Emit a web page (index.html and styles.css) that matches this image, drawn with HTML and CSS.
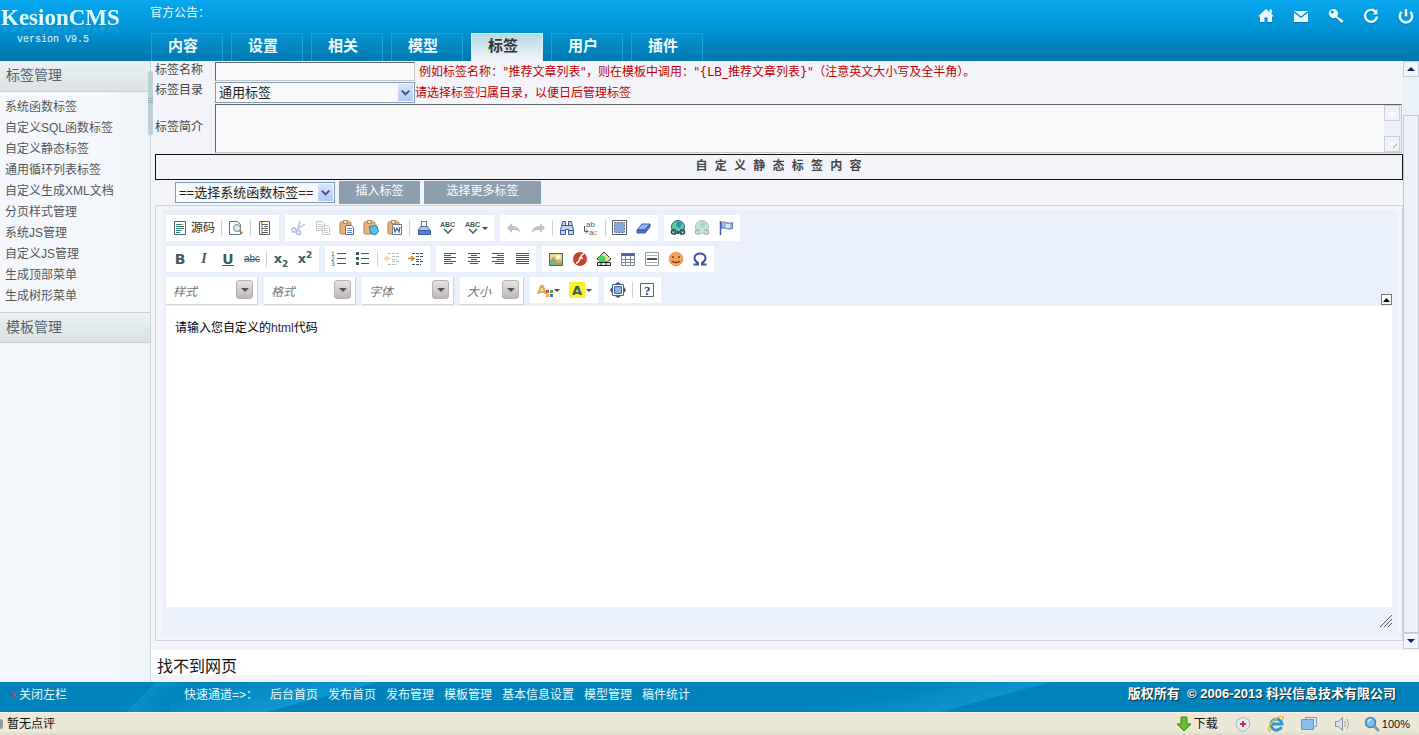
FILE: index.html
```html
<!DOCTYPE html>
<html lang="zh-CN">
<head>
<meta charset="utf-8">
<title>KesionCMS</title>
<link rel="stylesheet" href="styles.css">
</head>
<body>
<header class="top">
  <div class="brand">
    <div class="brand-name">KesionCMS</div>
    <div class="brand-version">version V9.5</div>
  </div>
  <div class="top-mid">
    <div class="notice">官方公告：</div>
    <nav class="tabs">
      <a class="tab" href="#">内容</a>
      <a class="tab" href="#">设置</a>
      <a class="tab" href="#">相关</a>
      <a class="tab" href="#">模型</a>
      <a class="tab active" href="#">标签</a>
      <a class="tab" href="#">用户</a>
      <a class="tab" href="#">插件</a>
    </nav>
  </div>
  <div class="quick">
    <button class="quick-btn" aria-label="首页"><svg viewBox="0 0 16 16"><path fill="#e8f9ff" d="M8 1 L0 8.500 H2 V14 H6.500 V9.500 H9.500 V14 H14 V8.500 H16 L13.800 6.300 V1.500 H11.500 V4.200 Z"/></svg></button>
    <button class="quick-btn" aria-label="邮件"><svg viewBox="0 0 16 16"><path fill="#e8f9ff" d="M1 3 H15 L8 8.500Z M1 4.800 L8 10 L15 4.800 V14 H1Z"/></svg></button>
    <button class="quick-btn" aria-label="密码"><svg viewBox="0 0 16 16"><path fill="#e8f9ff" fill-rule="evenodd" d="M5.500 1a4.600 4.600 0 1 0 2.400 8.500L13.500 15l2-1.500-1-2-1.500.2-.2-1.600-1.600.1-1.900-2A4.600 4.600 0 0 0 5.500 1M4.200 2.800a1.400 1.400 0 1 1 0 2.800 1.400 1.400 0 0 1 0-2.800"/></svg></button>
    <button class="quick-btn" aria-label="刷新"><svg viewBox="0 0 16 16"><path fill="none" stroke="#e8f9ff" stroke-width="2.400" d="M12.500 3.800A6 6 0 1 0 14 8.500"/><path fill="#e8f9ff" d="M14.500 1V6.500H9.500Z"/></svg></button>
    <button class="quick-btn" aria-label="退出"><svg viewBox="0 0 16 16"><path fill="none" stroke="#e8f9ff" stroke-width="2.600" d="M3.600 3.800A6.200 6.200 0 1 0 12.400 3.800M8 1V8.500"/></svg></button>
  </div>
</header>

<div class="main">
  <aside class="side">
    <h2 class="side-head">标签管理</h2>
    <ul class="side-list">
      <li><a href="#">系统函数标签</a></li>
      <li><a href="#">自定义SQL函数标签</a></li>
      <li><a href="#">自定义静态标签</a></li>
      <li><a href="#">通用循环列表标签</a></li>
      <li><a href="#">自定义生成XML文档</a></li>
      <li><a href="#">分页样式管理</a></li>
      <li><a href="#">系统JS管理</a></li>
      <li><a href="#">自定义JS管理</a></li>
      <li><a href="#">生成顶部菜单</a></li>
      <li><a href="#">生成树形菜单</a></li>
    </ul>
    <h2 class="side-head second">模板管理</h2>
    <div class="handle"></div>
  </aside>

  <div class="content">
    <div class="pane">
      <form class="form">
        <div class="field">
          <label for="name">标签名称</label>
          <input id="name" class="text-box" type="text">
          <span class="hint spaced">例如标签名称："推荐文章列表"，则在模板中调用："{LB_推荐文章列表}"（注意英文大小写及全半角）。</span>
        </div>
        <div class="field dir">
          <label for="dir">标签目录</label>
          <span class="select-box wide"><select id="dir"><option>通用标签</option></select><svg class="select-arrow" viewBox="0 0 16 16"><path d="M4 6l4 4 4-4" /></svg></span>
          <span class="hint">请选择标签归属目录，以便日后管理标签</span>
        </div>
        <div class="field intro">
          <label for="intro">标签简介</label>
          <div class="area-box">
            <textarea id="intro"></textarea>
            <div class="mini-scroll"><i><svg viewBox="0 0 14 14"><path d="M3 9L7 5l4 4z"/></svg></i><i><svg viewBox="0 0 14 14"><path d="M3 5l4 4 4-4z"/><path class="grip-line" d="M8 11l4-4"/></svg></i></div>
          </div>
        </div>
        <h3 class="section">自 定 义 静 态 标 签 内 容</h3>
        <div class="insert">
          <span class="select-box"><select aria-label="选择系统函数标签"><option>==选择系统函数标签==</option></select><svg class="select-arrow" viewBox="0 0 16 16"><path d="M4 6l4 4 4-4"/></svg></span>
          <button type="button" class="action">插入标签</button>
          <button type="button" class="action more">选择更多标签</button>
        </div>

        <div class="editor-frame">
        <div class="editor">
          <div class="toolbar">
            <div class="row">
              <div class="group">
                <button type="button" class="tool source"><svg viewBox="0 0 16 16"><path fill="#fff" stroke="#52646b" d="M2.500 1.500h11v13h-11z"/><path stroke="#2f7772" d="M4 4.500h5M4 6.500h8M4 8.500h8M4 10.500h6M4 12.500h4"/><path stroke="#e9b44f" d="M9 4.500h3"/></svg>源码</button><i class="sep"></i>
                <button type="button" class="tool" aria-label="预览"><svg viewBox="0 0 16 16"><path fill="#fff" stroke="#62737a" d="M1.500 1.500h8l3 3v10h-11z"/><circle cx="9" cy="8" r="3.500" fill="#dceaf0" stroke="#75868d"/><path stroke="#ba8351" stroke-width="2" d="M11.500 10.500l3 3"/></svg></button><i class="sep"></i>
                <button type="button" class="tool" aria-label="模板"><svg viewBox="0 0 16 16"><path fill="#fff" stroke="#52646b" d="M2.500 1.500h10v13h-10z"/><path stroke="#e9a82f" stroke-width="2" d="M5 2v12"/><path stroke="#55656c" d="M5 4.500h6M7 6.500h4M5 8.500h6M7 10.500h4M5 12.500h6"/></svg></button>
              </div>
              <div class="group">
                <button type="button" class="tool faded" aria-label="剪切"><svg viewBox="0 0 16 16"><path fill="none" stroke="#6c7e9c" stroke-width="1.800" d="M9 1L7 9M14 4L5 10"/><circle cx="3" cy="10" r="2" fill="none" stroke="#5568bc" stroke-width="1.800"/><circle cx="7.500" cy="12.500" r="2" fill="none" stroke="#5568bc" stroke-width="1.800"/></svg></button>
                <button type="button" class="tool faded" aria-label="复制"><svg viewBox="0 0 16 16"><path fill="#fff" stroke="#777" d="M1.500 1.500h6l2 2v7h-8zM7.500 5.500h5l2 2v7h-7z"/><path stroke="#888" d="M3 4.500h4M3 6.500h4M3 8.500h4M9 8.500h4M9 10.500h4M9 12.500h4"/></svg></button>
                <button type="button" class="tool" aria-label="粘贴"><svg viewBox="0 0 16 16"><rect x="1" y="2" width="11" height="12" rx="1" fill="#e8b47a" stroke="#b98350"/><path fill="#f8dfb1" stroke="#9a8866" d="M4.500.500h4v3h-4z"/><path fill="#fff" stroke="#5669a8" d="M6.500 5.500h6l2 2v7h-8z"/><path stroke="#6a83ca" d="M8 8.500h5M8 10.500h5M8 12.500h5"/></svg></button>
                <button type="button" class="tool" aria-label="粘贴为无格式文本"><svg viewBox="0 0 16 16"><rect x="1" y="2" width="11" height="12" rx="1" fill="#e8b47a" stroke="#b98350"/><path fill="#f8dfb1" stroke="#9a8866" d="M4.500.500h4v3h-4z"/><path fill="#5dbde6" stroke="#267eaa" d="M6.500 6.500l7-1 2 6-3 3.500-5-2z"/></svg></button>
                <button type="button" class="tool" aria-label="从 Word 粘贴"><svg viewBox="0 0 16 16"><rect x="1" y="2" width="11" height="12" rx="1" fill="#e8b47a" stroke="#b98350"/><path fill="#f8dfb1" stroke="#9a8866" d="M4.500.500h4v3h-4z"/><path fill="#fff" stroke="#64788f" d="M5.500 4.500h9v10h-9z"/><path fill="none" stroke="#3d5b7c" stroke-width="1.200" d="M7 7l1 5 2-4 2 4 1-5"/></svg></button><i class="sep"></i>
                <button type="button" class="tool" aria-label="打印"><svg viewBox="0 0 16 16"><path fill="#fff" stroke="#777b8c" d="M5.500 1.500h5v6h-5z"/><path fill="#b3c1df" stroke="#53699e" d="M4.500 6.500h7l2.500 4H2z"/><path fill="#5084d8" stroke="#365b9f" d="M2.500 10.500h12v4h-12z"/></svg></button>
                <button type="button" class="tool" aria-label="拼写检查"><svg viewBox="0 0 16 16"><text x="0" y="7" class="abc">ABC</text><path fill="none" stroke="#3f5c5c" stroke-width="1.500" d="M4 9l4 4 4-4"/></svg></button>
                <button type="button" class="tool drop" aria-label="即时拼写检查"><svg viewBox="0 0 16 16"><text x="0" y="7" class="abc">ABC</text><path fill="none" stroke="#3f5c5c" stroke-width="1.500" d="M4 9l4 4 4-4"/></svg></button>
              </div>
              <div class="group">
                <button type="button" class="tool faded" aria-label="撤消"><svg viewBox="0 0 16 16"><path fill="#667" d="M1 8l5-5v3c5 0 8 2 8 7-2-3-4-3-8-3v3z"/></svg></button>
                <button type="button" class="tool faded" aria-label="重做"><svg viewBox="0 0 16 16"><path fill="#667" d="M15 8l-5-5v3c-5 0-8 2-8 7 2-3 4-3 8-3v3z"/></svg></button><i class="sep"></i>
                <button type="button" class="tool" aria-label="查找"><svg viewBox="0 0 16 16"><path fill="#bfd7f4" stroke="#42578e" d="M3.500 1.500h3v4h3v-4h3l1 5 1 3v5h-5v-5h-3v5h-5v-5l1-3z"/><path stroke="#42578e" d="M3 5.500h4M9 5.500h4M2 10.500h4M10 10.500h4"/></svg></button>
                <button type="button" class="tool" aria-label="替换"><svg viewBox="0 0 16 16"><text x="3" y="7" class="rep">ab</text><text x="6" y="15" class="rep">a<tspan class="gold">c</tspan></text><path fill="none" stroke="#515a79" d="M1.500 6v5.500h3.500M3 9.500l2 2-2 2"/></svg></button><i class="sep"></i>
                <button type="button" class="tool" aria-label="全选"><svg viewBox="0 0 16 16"><path fill="#fff" stroke="#515f62" d="M.500 .500h14v14H.500z"/><path fill="#86a9dc" d="M3 3h9v9H3z"/><path fill="none" stroke="#486291" stroke-dasharray="2 1" d="M2.500 2.500h10v10h-10z"/></svg></button>
                <button type="button" class="tool" aria-label="清除格式"><svg viewBox="0 0 16 16"><path fill="#8eb6f4" stroke="#3c5bab" d="M6 4h8L9 10H1z"/><path fill="#4f75ca" stroke="#3c5bab" d="M1 10h8l5-6v3l-5 6H1z"/></svg></button>
              </div>
              <div class="group">
                <button type="button" class="tool" aria-label="插入链接"><svg viewBox="0 0 16 16"><circle cx="8" cy="7" r="6.500" fill="#5fc9a0" stroke="#315860"/><path fill="#358bc2" d="M7 1l5 2-2 5-4-2z"/><path fill="none" stroke="#23444c" stroke-width="1.600" d="M6 10H3.500a2 2 0 0 0 0 4H6M10 10h2.500a2 2 0 0 1 0 4H10M5 12h6"/></svg></button>
                <button type="button" class="tool faded" aria-label="取消链接"><svg viewBox="0 0 16 16"><circle cx="8" cy="7" r="6.500" fill="#5fc9a0" stroke="#315860"/><path fill="#358bc2" d="M7 1l5 2-2 5-4-2z"/><path fill="none" stroke="#23444c" stroke-width="1.600" d="M6 10H3.500a2 2 0 0 0 0 4H6M10 10h2.500a2 2 0 0 1 0 4H10"/></svg></button>
                <button type="button" class="tool" aria-label="锚点"><svg viewBox="0 0 16 16"><path stroke="#4b5aa0" stroke-width="1.500" d="M2.500 1v14"/><path fill="#9fb5dd" stroke="#6175af" d="M3.500 2.500c3-2 5 2 11 0v6c-6 2-7-2-11 0z"/><path fill="#d9e4f8" d="M8 4h4v4H8z"/></svg></button>
              </div>
            </div>

            <div class="row">
              <div class="group">
                <button type="button" class="tool letter"><b>B</b></button>
                <button type="button" class="tool letter serif"><i>I</i></button>
                <button type="button" class="tool letter"><u>U</u></button>
                <button type="button" class="tool strike"><s>abc</s></button><i class="sep"></i>
                <button type="button" class="tool letter script"><span>x<sub>2</sub></span></button>
                <button type="button" class="tool letter script"><span>x<sup>2</sup></span></button>
              </div>
              <div class="group">
                <button type="button" class="tool" aria-label="编号列表"><svg viewBox="0 0 16 16"><path stroke="#3f5c5c" d="M6 2.500h9M6 7.500h9M6 12.500h9"/><text x="0" y="5" class="num">1</text><text x="0" y="10" class="num">2</text><text x="0" y="15" class="num">3</text></svg></button>
                <button type="button" class="tool" aria-label="项目列表"><svg viewBox="0 0 16 16"><path stroke="#3f5c5c" d="M6 2.500h8M6 7.500h8M6 12.500h8"/><path fill="#3f5c5c" d="M1 1h3v3H1zM1 6h3v3H1zM1 11h3v3H1z"/></svg></button><i class="sep"></i>
                <button type="button" class="tool faded" aria-label="减少缩进"><svg viewBox="0 0 16 16"><path stroke="#3f5c5c" d="M4 2.500h11M8 5.500h7M8 8.500h5M8 10.500h7M4 13.500h9" stroke-dasharray="3 1"/><path fill="none" stroke="#d58d20" stroke-width="1.500" d="M7 7.500H1M4 5L1 7.500 4 10"/></svg></button>
                <button type="button" class="tool" aria-label="增加缩进"><svg viewBox="0 0 16 16"><path stroke="#3f5c5c" d="M4 2.500h11M8 5.500h7M8 8.500h5M8 10.500h7M4 13.500h9" stroke-dasharray="3 1"/><path fill="none" stroke="#d58d20" stroke-width="1.500" d="M0 7.500h6M3 5l3 2.500L3 10"/></svg></button>
              </div>
              <div class="group">
                <button type="button" class="tool" aria-label="左对齐"><svg viewBox="0 0 16 16"><path stroke="#3f5c5c" d="M2 2.500h12M2 4.500h7M2 6.500h12M2 8.500h7M2 10.500h12M2 12.500h9"/></svg></button>
                <button type="button" class="tool" aria-label="居中"><svg viewBox="0 0 16 16"><path stroke="#3f5c5c" d="M2 2.500h12M5 4.500h6M2 6.500h12M5 8.500h6M2 10.500h12M4 12.500h8"/></svg></button>
                <button type="button" class="tool" aria-label="右对齐"><svg viewBox="0 0 16 16"><path stroke="#3f5c5c" d="M2 2.500h12M7 4.500h7M2 6.500h12M7 8.500h7M2 10.500h12M5 12.500h9"/></svg></button>
                <button type="button" class="tool" aria-label="两端对齐"><svg viewBox="0 0 16 16"><path stroke="#3f5c5c" d="M2 2.500h13M2 4.500h13M2 6.500h13M2 8.500h13M2 10.500h13M2 12.500h13"/></svg></button>
              </div>
              <div class="group">
                <button type="button" class="tool" aria-label="图像"><svg viewBox="0 0 16 16"><path fill="#edda91" stroke="#456a5f" d="M1.500 2.500h13v12h-13z"/><path fill="#7fb37c" d="M2 14V9l4-3 3 5 5-2v5z"/><circle cx="10" cy="6" r="2" fill="#fff7cf"/><path fill="#daac63" d="M8 9h6v3H8z"/></svg></button>
                <button type="button" class="tool" aria-label="Flash"><svg viewBox="0 0 16 16"><circle cx="8" cy="8" r="7" fill="#c64334"/><path fill="none" stroke="#fff" stroke-width="1.500" d="M12 3c-5 0-3 9-8 9M7 7h4"/></svg></button>
                <button type="button" class="tool" aria-label="图形"><svg viewBox="0 0 16 16"><path fill="#efd7ae" stroke="#333" d="M8 1l7 7-4 3H5L1 8z"/><circle cx="6" cy="8" r="3.500" fill="#45d36b"/><path fill="#f0e45b" d="M9 6h5l-3 5z"/><path fill="#e5eef0" stroke="#222" d="M1.500 11.500h13v3h-13zM5 12v3M10 12v3"/></svg></button>
                <button type="button" class="tool" aria-label="表格"><svg viewBox="0 0 16 16"><path fill="#fff" stroke="#7a8797" d="M1.500 2.500h13v12h-13zM2 8.500h12M2 11.500h12M5.500 5v9M10.500 5v9"/><path fill="#52699d" d="M1 2h14v3H1z"/></svg></button>
                <button type="button" class="tool" aria-label="水平线"><svg viewBox="0 0 16 16"><path fill="#fff" stroke="#939a9d" d="M1.500 1.500h13v13h-13z"/><path stroke="#a8b0b2" d="M3 4.500h10M3 11.500h10"/><path fill="#42595b" d="M3 7h10v2H3z"/></svg></button>
                <button type="button" class="tool" aria-label="表情"><svg viewBox="0 0 16 16"><circle cx="8" cy="8" r="6.800" fill="#f3a458" stroke="#d47a38" stroke-width=".600"/><path fill="none" stroke="#7c3f2a" stroke-width="1.300" d="M4 6h2M10 6h2M4 10c2 2 6 2 8 0"/></svg></button>
                <button type="button" class="tool" aria-label="特殊符号"><svg viewBox="0 0 16 16"><path fill="none" stroke="#3b549e" stroke-width="2" d="M1.500 13.500H6V12C.500 9 2 2.500 8 2.500S15.500 9 10 12v1.500h4.500"/></svg></button>
              </div>
            </div>

            <div class="row">
              <button type="button" class="combo">样式<span class="knob"></span></button>
              <button type="button" class="combo">格式<span class="knob"></span></button>
              <button type="button" class="combo">字体<span class="knob"></span></button>
              <button type="button" class="combo small">大小<span class="knob"></span></button>
              <div class="group">
                <button type="button" class="tool drop" aria-label="文本颜色"><svg viewBox="0 0 16 16"><text x="0" y="12" class="color-a">A</text><path fill="#cc5440" d="M9 8h3v3H9z"/><path fill="#5b9d57" d="M13 8h3v3h-3z"/><path fill="#e4b23e" d="M9 12h3v3H9z"/><path fill="#466eb9" d="M13 12h3v3h-3z"/></svg></button>
                <button type="button" class="tool drop" aria-label="背景颜色"><svg viewBox="0 0 16 16"><path fill="#f7f32f" d="M0 0h16v16H0z"/><text x="3" y="13" class="back-a">A</text></svg></button>
              </div>
              <div class="group">
                <button type="button" class="tool" aria-label="全屏"><svg viewBox="0 0 16 16"><path fill="#fff" stroke="#50627e" d="M2.500 2.500h11v11h-11z"/><path fill="#86b4f0" stroke="#4266a8" d="M4.500 4.500h7v7h-7z"/><path fill="#40546d" d="M8 0l3 2H5zM8 16l3-2H5zM0 8l2-3v6zM16 8l-2-3v6z"/></svg></button><i class="sep"></i>
                <button type="button" class="tool" aria-label="关于"><svg viewBox="0 0 16 16"><path fill="#fff" stroke="#52646b" d="M1.500 1.500h13v13h-13z"/><text x="5" y="13" class="help">?</text></svg></button>
              </div>
              <button type="button" class="collapse" aria-label="折叠工具栏"><svg viewBox="0 0 11 11"><path d="M2 8h7L5.500 4z"/></svg></button>
            </div>
          </div>
          <div class="edit-area" contenteditable="true" role="textbox" aria-label="标签内容">请输入您自定义的<span class="code-word">html</span>代码</div>
          <div class="edit-foot"><svg viewBox="0 0 12 12"><path d="M0 12L12 0M4 12l8-8M8 12l4-4"/></svg></div>
        </div>
        </div>
      </form>
      <div class="scroll">
        <button class="scroll-btn" aria-label="向上"><svg viewBox="0 0 14 14"><path d="M3 9h8L7 5z"/></svg></button>
        <div class="thumb"></div>
        <button class="scroll-btn" aria-label="向下"><svg viewBox="0 0 14 14"><path d="M3 5h8L7 9z"/></svg></button>
      </div>
    </div>
    <div class="missing">找不到网页</div>
  </div>
</div>

<footer class="foot">
  <a class="close-side" href="#"><span class="cross">×</span>关闭左栏</a>
  <span class="channel">快速通道=&gt;：</span>
  <nav class="foot-nav">
    <a href="#">后台首页</a><a href="#">发布首页</a><a href="#">发布管理</a><a href="#">模板管理</a><a href="#">基本信息设置</a><a href="#">模型管理</a><a href="#">稿件统计</a>
  </nav>
  <div class="copyright">版权所有&nbsp; © 2006-2013 科兴信息技术有限公司</div>
</footer>

<div class="status">
  <span class="bubble"></span><span class="comment">暂无点评</span>
  <div class="status-tools">
    <button class="status-btn"><svg viewBox="0 0 16 16"><path fill="#69bb30" stroke="#3e8a1b" d="M5 1h6v7h4l-7 7-7-7h4z"/></svg>下载</button>
    <button class="status-btn" aria-label="医生"><svg viewBox="0 0 16 16"><path fill="#e3e9f2" stroke="#a9b6c8" d="M8 1l6 3 1 6-5 5H5L1 10 2 4z"/><path fill="#c9303e" d="M7 5h2v2h2v2H9v2H7V9H5V7h2z"/></svg></button>
    <button class="status-btn" aria-label="浏览器"><svg viewBox="0 0 16 16"><path fill="none" stroke="#2d9ad6" stroke-width="3" d="M13.500 11A5.500 5.500 0 1 1 14 8H4"/><path fill="none" stroke="#edb934" stroke-width="1.500" d="M3 15C-2 15 2 6 9 2s7-1 5.500 2"/></svg></button>
    <button class="status-btn" aria-label="窗口"><svg viewBox="0 0 16 16"><path fill="#d7e9fa" stroke="#7b9cc1" d="M4.500 1.500h11v9h-11z"/><path fill="#88bdf0" stroke="#6a94c4" d="M.500 3.500h12v10H.500z"/></svg></button>
    <button class="status-btn" aria-label="声音"><svg viewBox="0 0 16 16"><path fill="#dfe3e8" stroke="#87929e" d="M1.500 5.500h3l4-4v13l-4-4h-3z"/><path fill="none" stroke="#9ba6b1" d="M10.500 5q2 3 0 6M12.500 3q4 5 0 10"/></svg></button>
    <button class="status-btn zoom"><svg viewBox="0 0 16 16"><path stroke="#8c99a8" stroke-width="3" d="M10 10l5 5"/><circle cx="6.500" cy="6.500" r="5" fill="#79c2ef" stroke="#4583b6" stroke-width="1.500"/><path fill="none" stroke="#fff" d="M4 6q0-2.500 3-2.500"/></svg>100%</button>
  </div>
</div>
</body>
</html>
```
FILE: styles.css
```css
* { box-sizing: border-box; }
body {
  margin: 0;
  min-height: 100vh;
  display: flex;
  flex-direction: column;
  font: 12px/16px "Liberation Sans", "Noto Sans CJK SC", sans-serif;
  color: #444;
  background: #fff;
}
a { color: inherit; text-decoration: none; }
button { font: inherit; border: 0; padding: 0; margin: 0; background: none; color: inherit; }
svg { display: block; width: 16px; height: 16px; flex: none; }
h2, h3, ul { margin: 0; padding: 0; font-weight: normal; list-style: none; }

/* Header */
.top { display: flex; height: 61px; background: linear-gradient(#08a7ee, #0095d8 45%, #0076ab); color: #e9fbff; }
.brand { width: 150px; padding: 5px 0 0 1px; }
.brand-name { font: bold 23px/26px "Liberation Serif", serif; color: #dffaff; -webkit-box-reflect: below -10px linear-gradient(transparent 40%, rgba(255,255,255,.2)); }
.brand-version { font: 10px/12px "Liberation Mono", monospace; padding: 3px 0 0 16px; }
.top-mid { flex: 1; display: flex; flex-direction: column; justify-content: space-between; }
.notice { padding-top: 5px; }
.tabs { display: flex; gap: 8px; padding-left: 1px; }
.tab { width: 72px; height: 28px; border: 1px solid #1aa0d8; border-bottom: 0; background: linear-gradient(#0791cf, #0079b0); font-size: 15px; line-height: 24px; font-weight: bold; text-align: center; padding-right: 8px; }
.tab.active { background: linear-gradient(#b3d9e5, #f3f6fa); border-color: #d9eef5; color: #333; }
.quick { display: flex; gap: 19px; padding: 8px 5px 0 0; }
.quick-btn { height: 16px; filter: drop-shadow(0 1px 0 #0872a8); }

/* Sidebar */
.main { flex: 1; display: flex; }
.side { position: relative; width: 151px; border-right: 1px solid #c8d3dc; background: linear-gradient(90deg, #f4f8fd 70%, #edf3f6); }
.side-head { height: 31px; padding-left: 6px; border-bottom: 1px solid #c8d0d6; background: linear-gradient(#e9f1f3, #dae2e5); font-size: 14px; line-height: 29px; color: #52626b; }
.side-head.second { border-top: 1px solid #c8d0d6; }
.side-list { padding: 5px 0 5px 5px; }
.side-list li { height: 21px; line-height: 21px; color: #555; }
.handle { position: absolute; right: -3px; top: 10px; width: 5px; height: 64px; border-radius: 2px; background: repeating-linear-gradient(#94b3bc 0 1px, transparent 1px 2px) 0 27px / 5px 6px no-repeat, #bdd0d5; }

/* Form */
.content { flex: 1; min-width: 0; display: flex; flex-direction: column; }
.pane { flex: 1; display: flex; background: #f3f4f9; }
.form { flex: 1; min-width: 0; display: flex; flex-direction: column; padding: 1px 0 9px 4px; }
.field { display: flex; }
.field label { width: 60px; }
.text-box { width: 200px; height: 19px; padding: 0 2px; border: 1px solid #c4c4c4; border-top-color: #666; border-left-color: #666; background: #f9f9f9; font: inherit; }
.hint { color: #c00000; font-family: "DejaVu Sans", "Noto Sans CJK SC", sans-serif; line-height: 20px; }
.spaced { padding-left: 4px; }
.dir .hint { line-height: 22px; padding-top: 0; }
.select-box { position: relative; width: 160px; height: 21px; }
.select-box.wide { width: 200px; }
.select-box select { appearance: none; width: 100%; height: 100%; padding: 0 20px 0 3px; border: 1px solid #7f9db9; border-radius: 0; background: #f9f9f9; font: 13px/17px "Liberation Sans", "Noto Sans CJK SC", sans-serif; color: #222; }
.select-arrow { position: absolute; right: 2px; top: 2px; width: 15px; height: 17px; background: linear-gradient(#d8e4fd, #b4c8f6); fill: none; stroke: #3c5283; stroke-width: 2; pointer-events: none; }
.intro { align-items: center; }
.intro label { padding-bottom: 4px; }
.area-box { flex: 1; display: flex; height: 49px; border: 1px solid #c4c4c4; border-top-color: #666; border-left-color: #666; background: #f9f9f9; margin-right: 1px; }
.area-box textarea { flex: 1; border: 0; resize: none; background: transparent; padding: 2px; font: inherit; outline: 0; }
.mini-scroll { width: 17px; display: flex; flex-direction: column; justify-content: space-between; background: #e9f0fa; }
.mini-scroll i { width: 16px; height: 16px; border: 1px solid #c9ced8; background: #f0f2f8; }
.mini-scroll svg { width: 14px; height: 14px; fill: #fff; }
.grip-line { stroke: #aaa; }
.section { height: 26px; margin-top: 1px; border: 1px solid #111; text-align: center; font: bold 12px/22px "DejaVu Sans Mono", "Noto Sans CJK SC", monospace; padding-right: 1px; }
.insert { display: flex; align-items: center; gap: 4px; padding: 0 0 1px 20px; height: 25px; }
.action { width: 81px; height: 23px; background: #8c9fae; color: #fff; line-height: 21px; padding-bottom: 2px; }
.action.more { width: 117px; }

/* Rich text editor */
.editor-frame { flex: 1; display: flex; border: 1px solid #cfd3da; padding: 4px 5px 5px 7px; }
.editor { flex: 1; min-width: 0; display: flex; flex-direction: column; padding: 5px 5px 0 3px; background: #e9f0fb; }
.toolbar { display: flex; flex-direction: column; gap: 5px; }
.row { display: flex; gap: 6px; align-items: flex-start; }
.group { display: flex; align-items: center; height: 26px; padding: 0 2px; background: #fff; }
.tool { width: 24px; height: 24px; display: flex; align-items: center; justify-content: center; }
.source { width: 51px; gap: 3px; color: #333; }
.faded { opacity: .4; }
.sep { width: 1px; height: 16px; margin: 0 2px; background: #d0d4d6; }
.drop { width: 32px; gap: 1px; }
.drop::after { content: ""; border: 3px solid transparent; border-top-color: #444; border-bottom: 0; }
.letter { font: bold 14px/20px "DejaVu Sans", sans-serif; color: #3f5c5c; }
.serif { font-family: "Liberation Serif", serif; }
.script { font-size: 13px; }
.script sub, .script sup { font-size: 9px; line-height: 0; }
.strike { font-size: 10px; color: #3f5c5c; }
.abc { font: bold 7px "Liberation Sans", sans-serif; fill: #3f5c5c; }
.rep { font: 8px "Liberation Sans", sans-serif; fill: #515a79; }
.gold { fill: #e49a2e; }
.num { font: 6px "DejaVu Sans", sans-serif; fill: #3f5c5c; }
.color-a { font: bold 13px "DejaVu Sans", sans-serif; fill: #e2a755; }
.back-a { font: bold 13px "DejaVu Sans", sans-serif; fill: #3f5c4c; }
.help { font: bold 13px "Liberation Serif", serif; fill: #34438b; }
.combo { width: 92px; height: 28px; display: flex; align-items: flex-start; justify-content: space-between; padding: 3px 4px 0 7px; background: #fff; border-right: 1px solid #cfd3d8; border-bottom: 1px solid #cfd3d8; color: #777; font-style: italic; line-height: 24px; }
.combo.small { width: 64px; }
.knob { width: 17px; height: 19px; border: 1px solid #b5afaf; border-radius: 3px; background: linear-gradient(#e8e4e4, #bdb7b7); display: flex; justify-content: center; }
.knob::after { content: ""; margin-top: 7px; height: 4px; border: 4px solid transparent; border-top-color: #555; border-bottom: 0; }
.collapse { margin-left: auto; align-self: flex-end; width: 11px; height: 11px; outline: 1px solid #777; outline-offset: -1px; background: #fff; }
.collapse svg { width: 11px; height: 11px; }
.edit-area { flex: 1; margin-top: 1px; padding: 14px 9px; background: #fff; color: #000; outline: 0; }
.code-word { color: #3c1e55; }
.edit-foot { height: 28px; display: flex; justify-content: flex-end; align-items: center; }
.edit-foot svg { width: 12px; height: 12px; fill: none; stroke: #555; }

.scroll { width: 16px; display: flex; flex-direction: column; background: #e9f0fa; padding-bottom: 1px; }
.scroll-btn { height: 16px; border: 1px solid #c9ced8; background: #f1f4fa; }
.scroll-btn svg { width: 14px; height: 14px; fill: #0a246a; }
.thumb { flex: 1; margin-top: 38px; border: 1px solid #c5cad2; background: #ebf0fb; }
.missing { height: 32px; padding-left: 6px; font-size: 16px; line-height: 34px; color: #111; background: linear-gradient(#fff 25px, #f2f4f7 25px); }

/* Footer */
.foot { display: flex; align-items: flex-start; height: 30px; padding: 4px 23px 0 10px; color: #e7fbff; line-height: 18px;
  background: linear-gradient(135deg, transparent 30%, #0c90c8 31%, transparent 55%) 110px 0 / 120px 30px no-repeat, linear-gradient(165deg, transparent 10%, #0f97d0 50%, transparent 51%) 170px 0 / 300px 30px no-repeat, linear-gradient(165deg, transparent 30%, #0c93cb 60%, transparent 61%) 760px 0 / 370px 30px no-repeat, #0082ba; }
.close-side { width: 174px; }
.cross { display: inline-block; width: 9px; color: #ef3349; }
.channel { width: 86px; }
.foot-nav { flex: 1; display: flex; gap: 10px; }
.copyright { font-size: 13px; line-height: 15px; font-weight: bold; color: #fff; text-shadow: 1px 1px 1px #222; }

.status { display: flex; align-items: center; height: 23px; padding-right: 9px; border-top: 1px solid #f7f6ec; background: linear-gradient(#ebe8d6 18px, #dedbc9); color: #111; }
.bubble { width: 3px; height: 10px; border-radius: 0 5px 5px 0; background: #999; margin-right: 4px; }
.status-tools { margin-left: auto; display: flex; gap: 17px; }
.status-btn { display: flex; align-items: center; gap: 2px; }
.status-btn.zoom { margin-left: -3px; font-size: 11px; }
```
